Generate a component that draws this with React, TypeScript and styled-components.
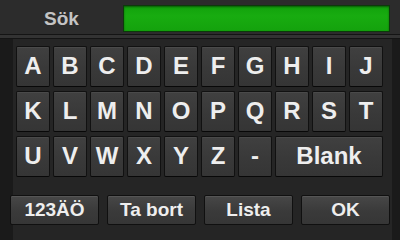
import React from 'react';
import styled, { createGlobalStyle } from 'styled-components';

const GlobalStyle = createGlobalStyle`
  html, body {
    margin: 0;
    padding: 0;
    width: 400px;
    height: 240px;
    overflow: hidden;
    background: #1c1c1c;
    font-family: 'Liberation Sans', Arial, sans-serif;
  }
`;

const ROWS: string[][] = [
  ['A', 'B', 'C', 'D', 'E', 'F', 'G', 'H', 'I', 'J'],
  ['K', 'L', 'M', 'N', 'O', 'P', 'Q', 'R', 'S', 'T'],
  ['U', 'V', 'W', 'X', 'Y', 'Z', '-'],
];

const ACTIONS = ['123ÄÖ', 'Ta bort', 'Lista', 'OK'];

function App() {
  return (
    <Screen>
      <GlobalStyle />
      <Header>
        <SearchLabel>Sök</SearchLabel>
        <SearchField />
      </Header>
      <HeaderEdge />
      <Keyboard>
        <KeyGrid>
          {ROWS.flat().map((k) => (
            <Key key={k}>{k}</Key>
          ))}
          <Key $span={3}>Blank</Key>
        </KeyGrid>
        <ActionRow>
          {ACTIONS.map((a) => (
            <ActionButton key={a}>{a}</ActionButton>
          ))}
        </ActionRow>
      </Keyboard>
    </Screen>
  );
}

export default App;

const Screen = styled.div`
  display: flex;
  flex-direction: column;
  width: 400px;
  height: 240px;
`;

const Header = styled.div`
  display: flex;
  align-items: stretch;
  height: 35px;
  background: #2c2c2c;
  border-bottom: 1px solid #141414;
  box-sizing: border-box;
  padding: 5px 10px 2px 0;
`;

const SearchLabel = styled.div`
  width: 123px;
  display: flex;
  align-items: center;
  justify-content: center;
  color: #c4c4c4;
  font-size: 19px;
  font-weight: bold;
`;

const SearchField = styled.div`
  flex: 1;
  background: linear-gradient(#12a20c, #18ac10 40%, #14a20d);
  border: 1px solid #0d3a0b;
  box-shadow: inset 0 1px 2px rgba(0, 0, 0, 0.45);
`;

const HeaderEdge = styled.div`
  height: 3px;
  background: #333333;
  border-bottom: 1px solid #141414;
`;

const Keyboard = styled.div`
  flex: 1;
  display: flex;
  flex-direction: column;
  background: linear-gradient(to right, #1a1a1a 13px, #252525 13px, #252525 392px, #1a1a1a 392px);
  padding-top: 7px;
`;

const KeyGrid = styled.div`
  display: grid;
  grid-template-columns: repeat(10, 34px);
  grid-auto-rows: 41px;
  column-gap: 3px;
  row-gap: 4px;
  margin-left: 16px;
`;

const Key = styled.div<{ $span?: number }>`
  grid-column: span ${({ $span }) => $span ?? 1};
  display: flex;
  align-items: center;
  justify-content: center;
  box-sizing: border-box;
  background: linear-gradient(#404040, #393939 55%, #353535);
  border: 1px solid #111111;
  border-bottom-color: #080808;
  border-radius: 2px;
  box-shadow: inset 0 1px 0 #4a4a4a;
  color: #eeeeee;
  font-size: 24px;
  font-weight: bold;
  padding-bottom: 1px;
`;

const ActionRow = styled.div`
  display: flex;
  gap: 8px;
  margin: 18px 0 0 10px;
`;

const ActionButton = styled.div`
  width: 89px;
  height: 30px;
  display: flex;
  align-items: center;
  justify-content: center;
  box-sizing: border-box;
  background: linear-gradient(#474747, #3a3a3a 55%, #363636);
  border: 1px solid #101010;
  border-radius: 2px;
  box-shadow: inset 0 1px 0 #555555;
  color: #eeeeee;
  font-size: 19px;
  font-weight: bold;
`;
